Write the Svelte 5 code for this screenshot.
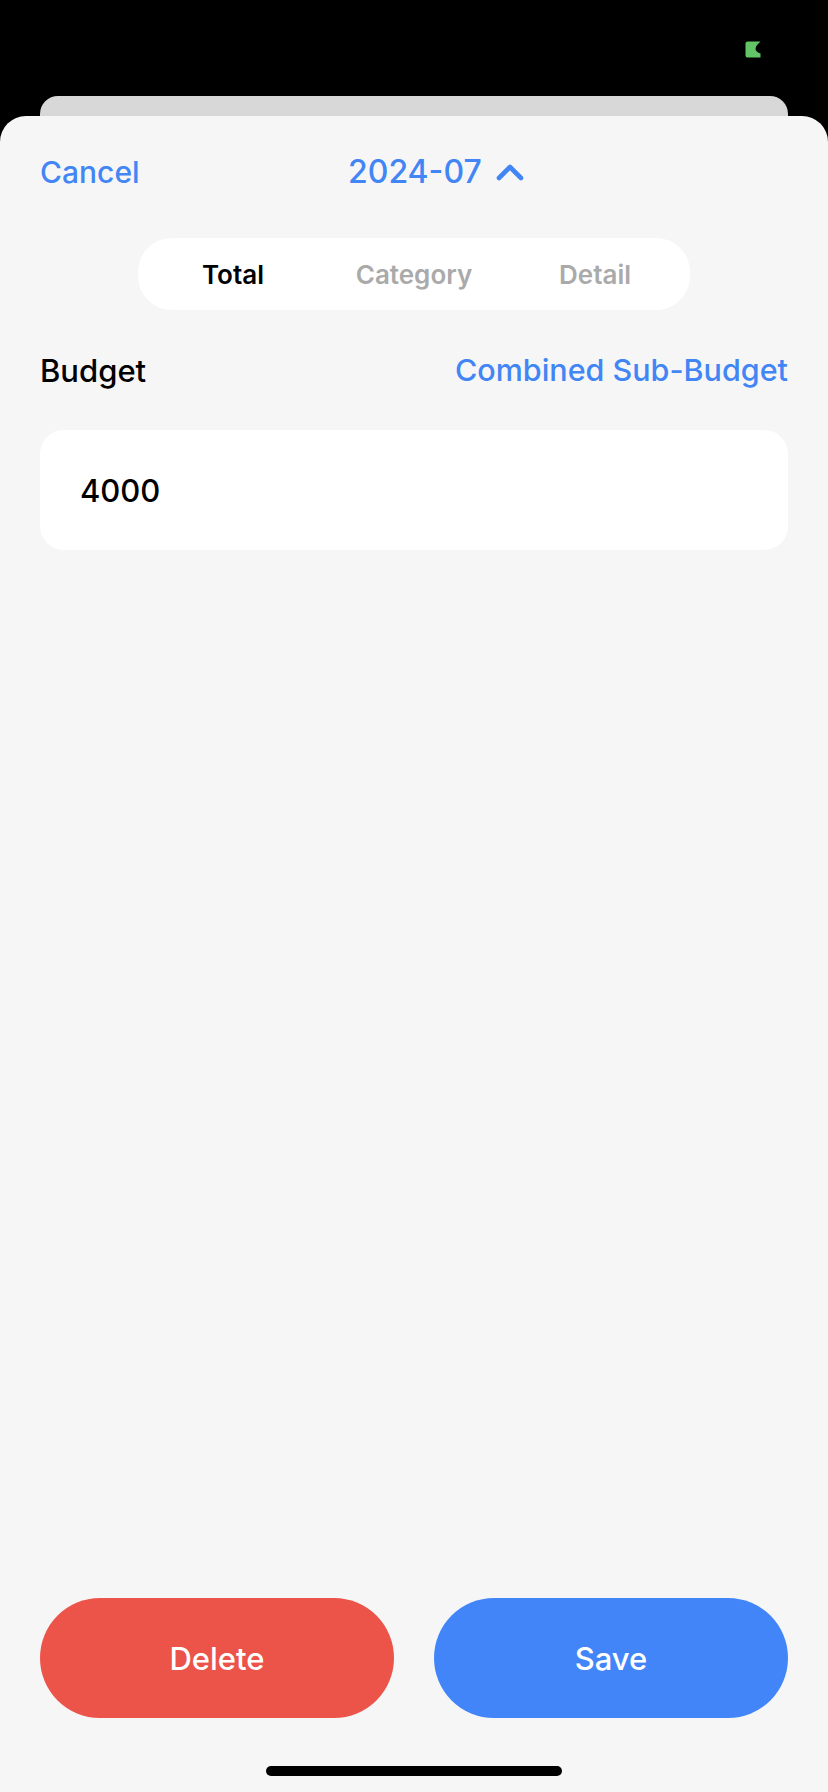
<script>
  let tabs = ['Total', 'Category', 'Detail'];
  let active = 'Total';
  let budget = '4000';
</script>

<div class="screen">
  <div class="status">
    <svg class="battery" width="16" height="17" viewBox="0 0 16 17">
      <path d="M2.5 0.5H15.5C12.5 3 10.5 5.5 10.5 8C10.5 9.8 12.5 11.5 15.5 12.5V16.5H2.5Q0.5 16.5 0.5 14.5V2.5Q0.5 0.5 2.5 0.5Z" fill="#62c466" />
    </svg>
  </div>
  <div class="back-card"></div>

  <div class="sheet">
    <header>
      <button class="link cancel">Cancel</button>
      <button class="link month">
        2024-07
        <svg width="28" height="18" viewBox="0 0 28 18">
          <path d="M3 15L14 4L25 15" fill="none" stroke="#4285f4" stroke-width="4.6" stroke-linecap="round" stroke-linejoin="round" />
        </svg>
      </button>
    </header>

    <div class="tabs">
      {#each tabs as tab}
        <button class="tab" class:active={tab === active} on:click={() => (active = tab)}>{tab}</button>
      {/each}
    </div>

    <div class="row">
      <span class="label">Budget</span>
      <button class="link sub">Combined Sub-Budget</button>
    </div>

    <div class="field">{budget}</div>

    <div class="actions">
      <button class="action delete">Delete</button>
      <button class="action save">Save</button>
    </div>

    <div class="home"></div>
  </div>
</div>

<style>
  :global(body) {
    margin: 0;
    background: #000;
  }

  .screen {
    width: 828px;
    height: 1792px;
    display: flex;
    flex-direction: column;
    background: #000;
    font-family: Inter, "Liberation Sans", sans-serif;
    overflow: hidden;
  }

  button {
    border: none;
    background: none;
    padding: 0;
    font-family: inherit;
    cursor: pointer;
  }

  .status {
    height: 96px;
    display: flex;
    justify-content: flex-end;
    align-items: flex-start;
    padding: 41px 67px 0 0;
    box-sizing: border-box;
  }

  .back-card {
    height: 20px;
    margin: 0 40px;
    background: #d8d8d8;
    border-radius: 18px 18px 0 0;
  }

  .sheet {
    flex: 1;
    display: flex;
    flex-direction: column;
    background: #f6f6f7;
    border-radius: 26px 26px 0 0;
    padding: 0 40px;
  }

  header {
    position: relative;
    display: flex;
    align-items: center;
    height: 36px;
    margin-top: 38px;
  }

  .link {
    color: #4285f4;
    font-weight: 500;
    font-size: 30px;
    line-height: 36px;
  }

  .month {
    position: absolute;
    left: 308px;
    top: 0;
    display: flex;
    align-items: center;
    gap: 14px;
    font-size: 32px;
  }

  .tabs {
    align-self: center;
    display: flex;
    align-items: center;
    justify-content: center;
    width: 552px;
    height: 72px;
    margin-top: 48px;
    background: #fff;
    border-radius: 34px;
  }

  .tab {
    width: 181px;
    font-size: 26px;
    font-weight: 600;
    color: #aaaaaa;
  }

  .tab.active {
    color: #000;
  }

  .row {
    display: flex;
    justify-content: space-between;
    align-items: center;
    height: 36px;
    margin-top: 42px;
  }

  .label {
    font-size: 31px;
    font-weight: 500;
    color: #000;
  }

  .sub {
    font-size: 30.5px;
  }

  .field {
    height: 120px;
    margin-top: 42px;
    padding-left: 40px;
    display: flex;
    align-items: center;
    background: #fff;
    border-radius: 24px;
    font-size: 31px;
    font-weight: 500;
    color: #000;
  }

  .actions {
    display: flex;
    gap: 40px;
    margin-top: auto;
  }

  .action {
    flex: 1;
    height: 120px;
    border-radius: 60px;
    color: #fff;
    font-size: 31px;
    font-weight: 500;
  }

  .delete {
    background: #ec5349;
  }

  .save {
    background: #4285f8;
  }

  .home {
    align-self: center;
    width: 296px;
    height: 10px;
    margin: 48px 0 16px;
    background: #000;
    border-radius: 5px;
  }
</style>
